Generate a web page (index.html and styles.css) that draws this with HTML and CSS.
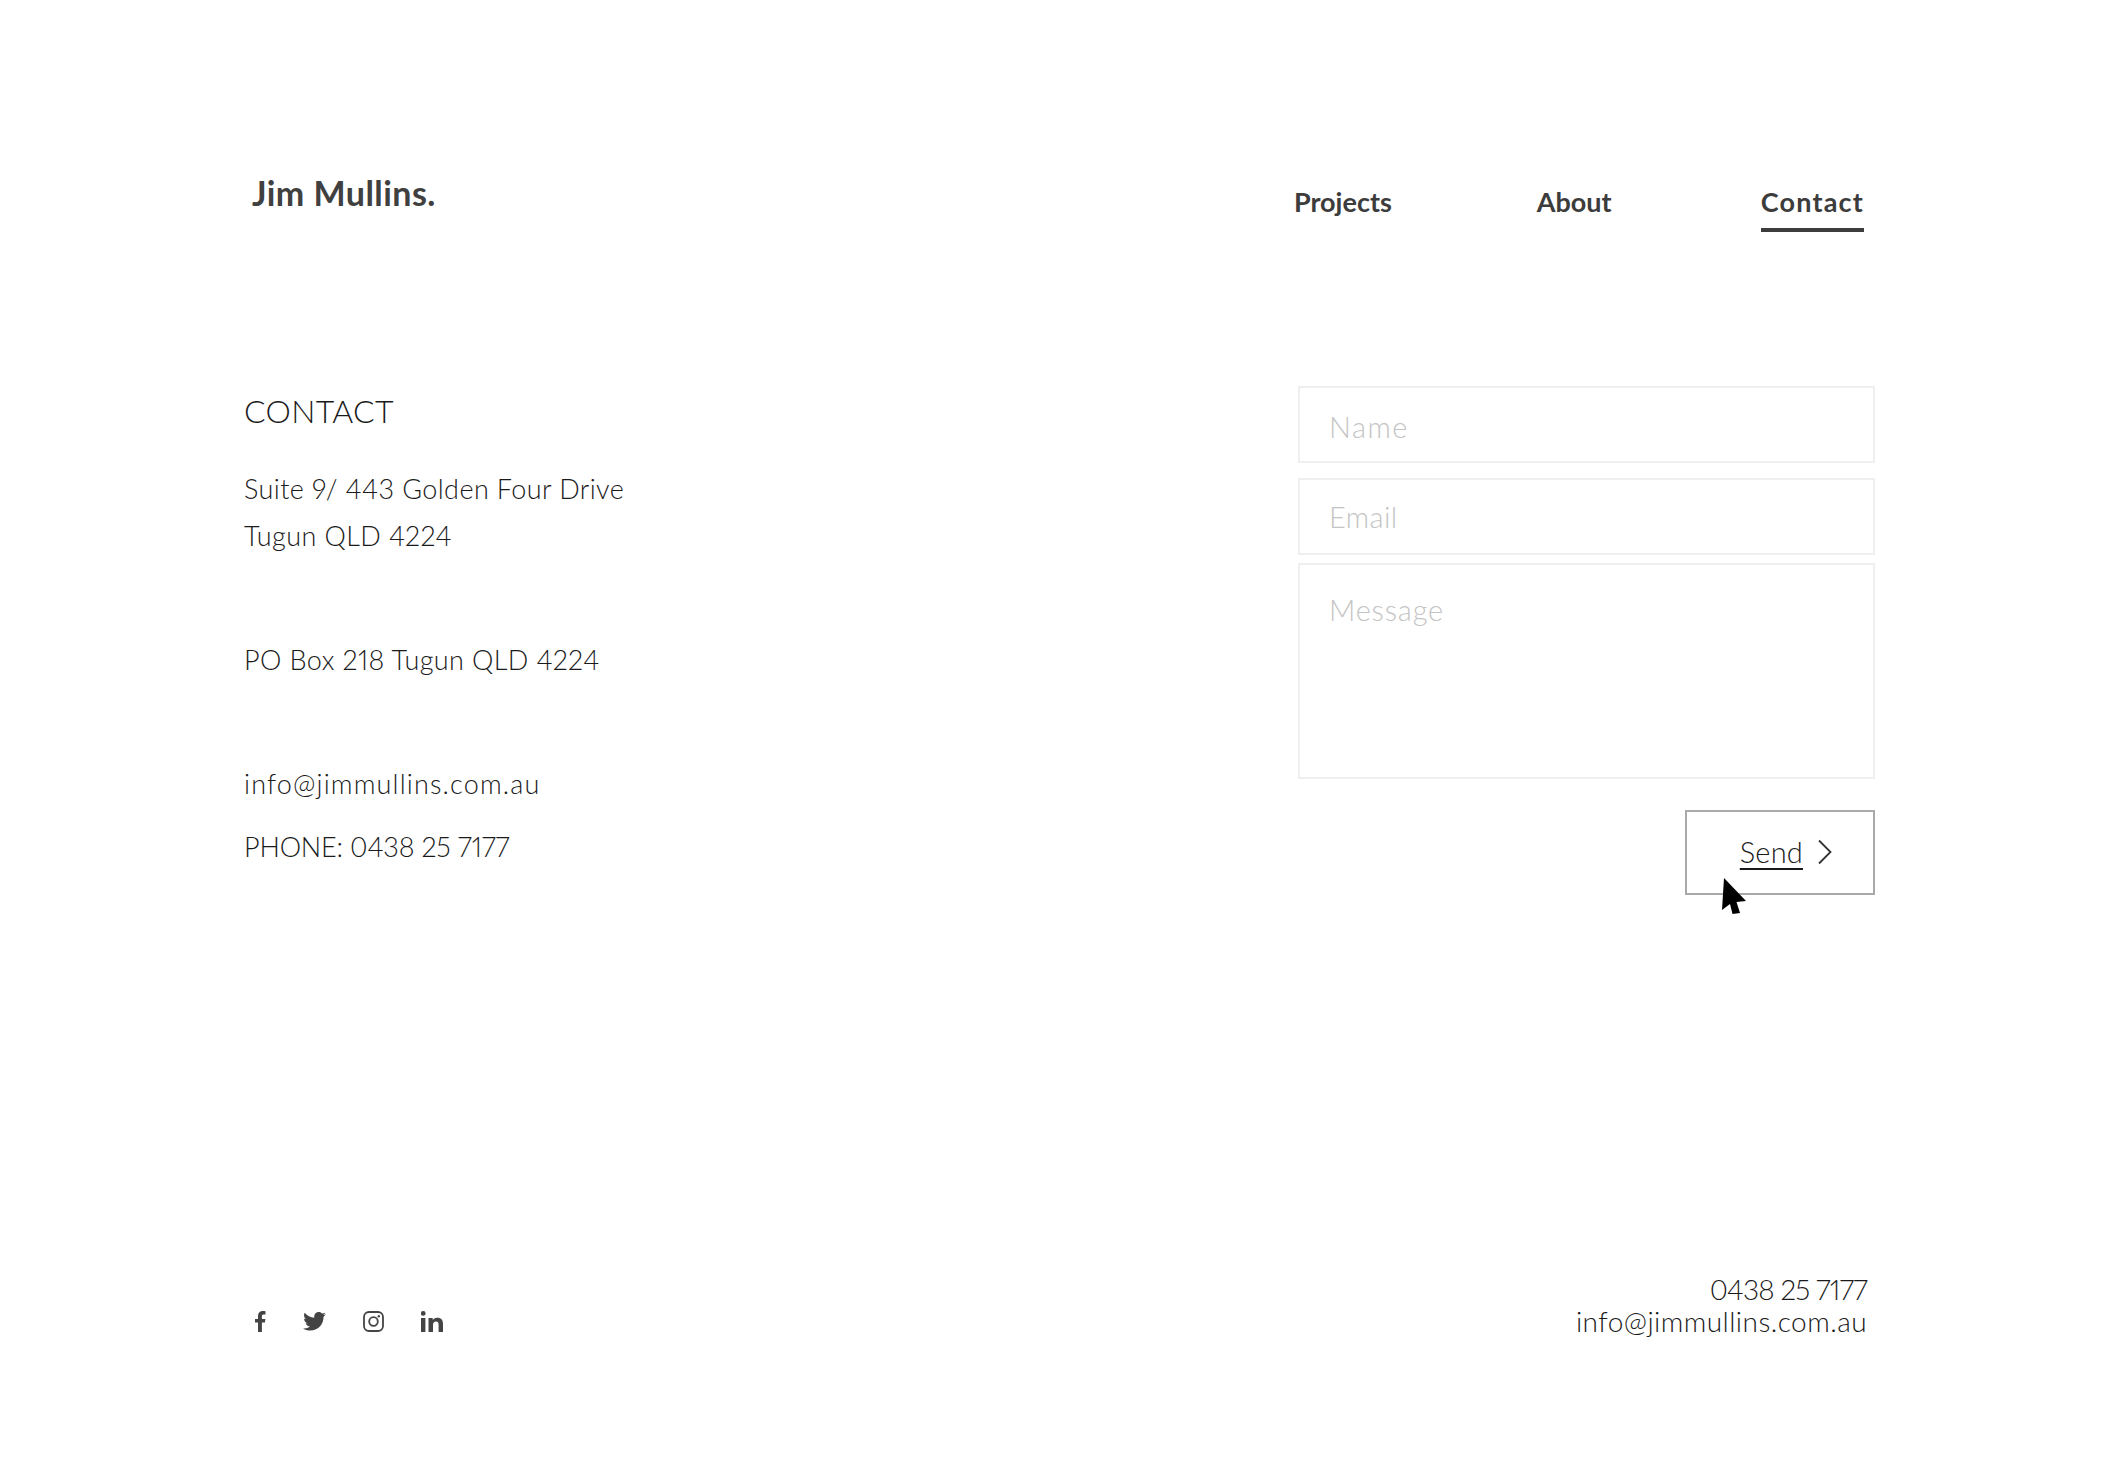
FILE: index.html
```html
<!DOCTYPE html>
<html lang="en">
<head>
    <meta charset="UTF-8">
    <meta name="viewport" content="width=device-width, initial-scale=1.0">
    <title>Jim Mullins. - Contact</title>
    <link rel="stylesheet" href="styles.css">
</head>
<body>
    <div class="page">
        <header class="site-header">
            <a class="logo" href="#">Jim Mullins.</a>
            <nav class="nav">
                <a href="#">Projects</a>
                <a href="#">About</a>
                <a class="active" href="#">Contact</a>
            </nav>
        </header>
        <main class="contact">
            <section class="details">
                <h1>CONTACT</h1>
                <p class="address">Suite 9/ 443 Golden Four Drive<br>Tugun QLD 4224</p>
                <p class="pobox">PO Box 218 Tugun QLD 4224</p>
                <p class="email">info@jimmullins.com.au</p>
                <p class="phone">PHONE: 0438 25 7177</p>
            </section>
            <form class="contact-form">
                <input class="name-field" type="text" placeholder="Name">
                <input class="email-field" type="text" placeholder="Email">
                <textarea placeholder="Message"></textarea>
                <button type="button" class="send">
                    <span>Send</span>
                    <svg width="16" height="26" viewBox="0 0 16 26"><path d="M2 1.500 L13.500 13 L2 24.500" fill="none" stroke="#333" stroke-width="1.800"/></svg>
                    <svg class="cursor" width="26" height="38" viewBox="0 0 26 38"><path d="M3 1 L25 24 L15.500 25 L19 36 L11.500 37 L9 27 L1 33 Z" fill="#000"/></svg>
                </button>
            </form>
        </main>
        <footer class="site-footer">
            <div class="social">
                <svg width="11" height="21" viewBox="0 0 11 21"><path d="M3 21 V11.500 H0 V8 H3 V5 C3 1.800 5 0 7.800 0 C9 0 10.200 .1 10.500 .2 V3.400 H8.600 C7.200 3.400 6.900 4.100 6.900 5.200 V8 H10.400 L9.900 11.500 H6.900 V21 Z" fill="#444"/></svg>
                <svg width="23" height="19" viewBox="0 0 24 20"><path d="M24 2.400 C23.100 2.800 22.200 3 21.200 3.200 C22.200 2.500 23 1.600 23.400 .4 C22.400 1 21.400 1.400 20.200 1.700 C19.300 .7 18 0 16.600 0 C13.900 0 11.700 2.200 11.700 4.900 C11.700 5.300 11.800 5.700 11.800 6 C7.800 5.800 4.200 3.900 1.700 .9 C1.300 1.600 1 2.500 1 3.400 C1 5.100 1.900 6.600 3.200 7.500 C2.400 7.500 1.700 7.300 1 6.900 V7 C1 9.400 2.700 11.300 4.900 11.800 C4.100 12 3.200 12 2.700 11.900 C3.300 13.800 5.100 15.300 7.300 15.300 C5.600 16.600 3.500 17.400 1.200 17.400 C.8 17.400 .4 17.400 0 17.300 C2.200 18.700 4.800 19.500 7.500 19.500 C16.600 19.500 21.500 12 21.500 5.500 V4.900 C22.500 4.200 23.300 3.400 24 2.400 Z" fill="#444"/></svg>
                <svg width="21" height="21" viewBox="0 0 21 21"><rect x="1" y="1" width="19" height="19" rx="5" fill="none" stroke="#444" stroke-width="1.800"/><circle cx="10.500" cy="10.500" r="4.300" fill="none" stroke="#444" stroke-width="1.800"/><circle cx="15.800" cy="5.200" r="1.200" fill="#444"/></svg>
                <svg width="22" height="21" viewBox="0 0 22 21"><rect x="0" y="7" width="4.400" height="14" fill="#444"/><circle cx="2.200" cy="2.400" r="2.400" fill="#444"/><path d="M7.500 7 H11.700 V9 C12.400 7.800 14 6.700 16.200 6.700 C20.600 6.700 22 9.300 22 13 V21 H17.600 V13.800 C17.600 12 17.200 10.500 15.100 10.500 C13 10.500 12 11.900 12 13.800 V21 H7.500 Z" fill="#444"/></svg>
            </div>
            <div class="footer-contact">
                <div class="footer-phone">0438 25 7177</div>
                <div>info@jimmullins.com.au</div>
            </div>
        </footer>
    </div>
</body>
</html>
```
FILE: styles.css
```css
* {
    box-sizing: border-box;
}
body {
    margin: 0;
    background: #fff;
    color: #1a1a1a;
    font-family: "Lato", "Liberation Sans", sans-serif;
    font-weight: 400;
    font-variant-numeric: proportional-nums;
}
a {
    color: inherit;
    text-decoration: none;
}
.page {
    height: 1477px;
    padding: 0 247px 0 244px;
    position: relative;
}

/* header */
.site-header {
    display: flex;
    justify-content: space-between;
    padding-top: 172px;
    height: 386px;
}
.logo {
    margin-left: 8px;
    font-size: 34px;
    line-height: 42px;
    font-weight: 700;
    letter-spacing: .45px;
    color: #404040;
}
.nav {
    display: flex;
    gap: 145px;
    margin-right: 11px;
    padding-top: 12px;
    align-items: flex-start;
}
.nav a {
    font-size: 27px;
    line-height: 36px;
    font-weight: 700;
    color: #3c3c3c;
    padding-bottom: 8px;
    border-bottom: 4px solid transparent;
}
.nav a.active {
    margin-left: 4px;
    letter-spacing: 1.2px;
    border-bottom-color: #3c3c3c;
}

/* main */
.contact {
    display: flex;
    justify-content: space-between;
    height: 846px;
}
.details h1 {
    margin: 3px 0 0;
    font-size: 32px;
    line-height: 44px;
    font-weight: 300;
    letter-spacing: .3px;
}
.details p {
    margin: 0;
    font-size: 27px;
    line-height: 47px;
    font-weight: 300;
    letter-spacing: .4px;
}
.details .address {
    margin-top: 32px;
}
.details .pobox {
    margin-top: 77px;
}
.details .email {
    margin-top: 77px;
    letter-spacing: 1.15px;
}
.details .phone {
    margin-top: 16px;
    letter-spacing: -.17px;
}

/* form */
.contact-form {
    width: 577px;
    display: flex;
    flex-direction: column;
    align-items: flex-end;
}
.contact-form input,
.contact-form textarea {
    display: block;
    width: 100%;
    border: 2px solid #efefef;
    background: #fff;
    padding: 0 29px;
    font-family: inherit;
    font-size: 29px;
    font-weight: 300;
    letter-spacing: .8px;
    color: #333;
    outline: none;
}
.contact-form ::placeholder {
    color: #c4c4c4;
    opacity: 1;
}
.contact-form input {
    height: 77px;
}
.contact-form .name-field {
    margin-bottom: 15px;
    padding-top: 4px;
    letter-spacing: 1.5px;
}
.contact-form .email-field {
    margin-bottom: 8px;
    letter-spacing: .4px;
}
.contact-form textarea {
    height: 216px;
    padding-top: 27px;
    resize: none;
    margin-bottom: 31px;
}
.send {
    width: 190px;
    height: 85px;
    border: 2px solid #a9a9a9;
    background: #fff;
    display: flex;
    align-items: center;
    justify-content: flex-end;
    gap: 14px;
    padding: 0 40px 2px 0;
    position: relative;
    font-family: inherit;
    font-size: 29px;
    font-weight: 300;
    letter-spacing: .2px;
    color: #1a1a1a;
}
.send span {
    text-decoration: underline;
    text-underline-offset: 5px;
    text-decoration-thickness: 2px;
}
.cursor {
    position: absolute;
    left: 34px;
    top: 65px;
}

/* footer */
.site-footer {
    display: flex;
    justify-content: space-between;
    align-items: flex-start;
}
.social {
    display: flex;
    align-items: center;
    gap: 37px;
    margin: 79px 0 0 11px;
}
.footer-contact {
    margin-top: 41px;
    text-align: right;
    padding-right: 8px;
    font-size: 28px;
    line-height: 32px;
    font-weight: 300;
    letter-spacing: .45px;
}
.footer-phone {
    letter-spacing: -.85px;
}
```
